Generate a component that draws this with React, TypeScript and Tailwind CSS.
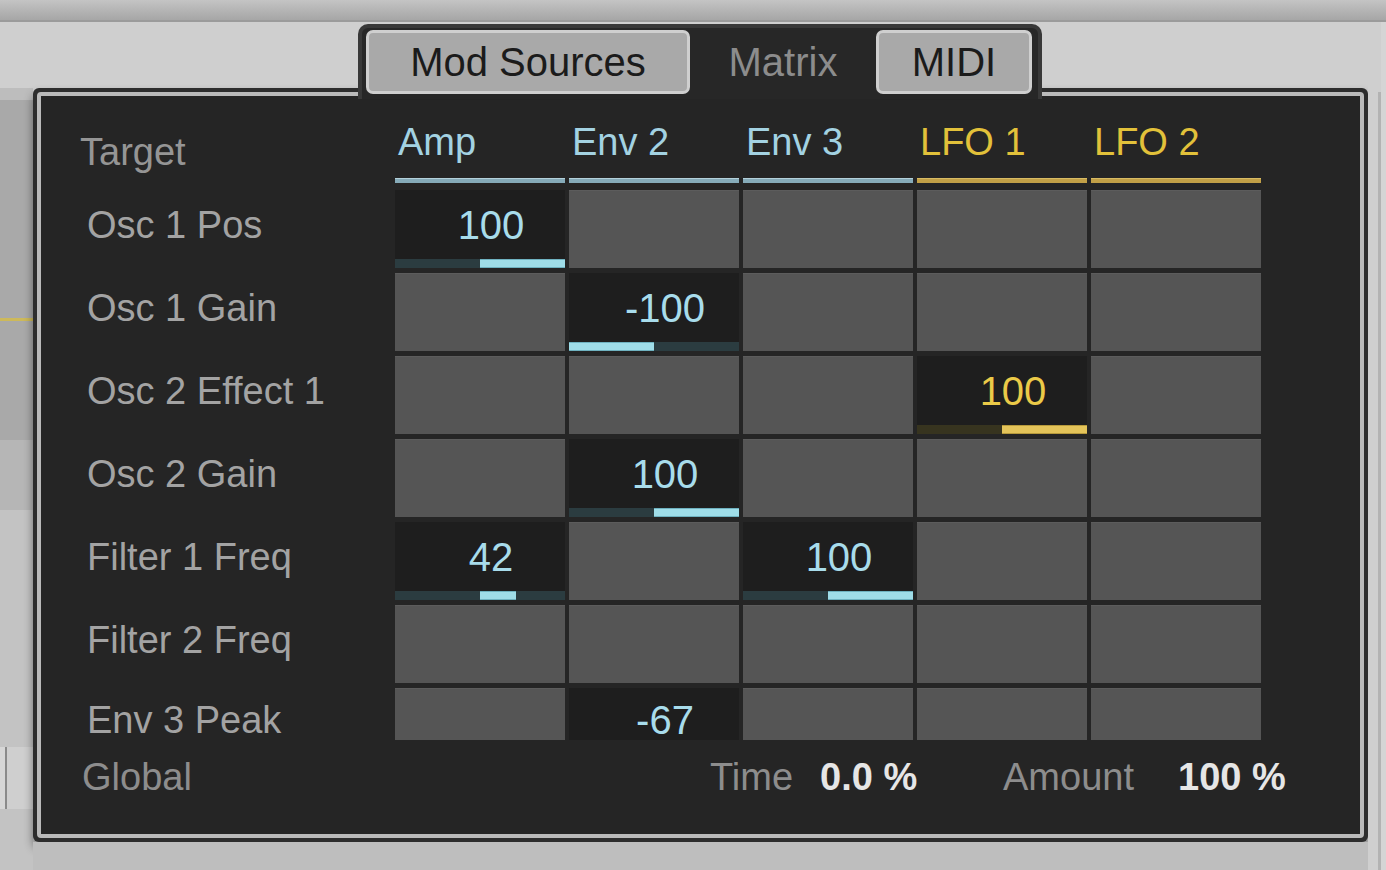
import React from 'react';

type Tone = 'blue' | 'yellow';

interface Source {
  name: string;
  tone: Tone;
}

interface Row {
  label: string;
  values: (number | null)[];
}

const sources: Source[] = [
  { name: 'Amp', tone: 'blue' },
  { name: 'Env 2', tone: 'blue' },
  { name: 'Env 3', tone: 'blue' },
  { name: 'LFO 1', tone: 'yellow' },
  { name: 'LFO 2', tone: 'yellow' },
];

const rows: Row[] = [
  { label: 'Osc 1 Pos', values: [100, null, null, null, null] },
  { label: 'Osc 1 Gain', values: [null, -100, null, null, null] },
  { label: 'Osc 2 Effect 1', values: [null, null, null, 100, null] },
  { label: 'Osc 2 Gain', values: [null, 100, null, null, null] },
  { label: 'Filter 1 Freq', values: [42, null, 100, null, null] },
  { label: 'Filter 2 Freq', values: [null, null, null, null, null] },
];

// last row is scrolled half out of view
const lastRow: Row = { label: 'Env 3 Peak', values: [null, -67, null, null, null] };

function Cell({ value, tone, short }: { value: number | null; tone: Tone; short?: boolean }) {
  const height = short ? 'h-[52px]' : 'h-[78px]';
  if (value === null) {
    return <div className={`${height} bg-[#555555] border-t border-[#5c5c5c]`} />;
  }
  const amount = Math.abs(value);
  const yellow = tone === 'yellow';
  const textColor = yellow ? 'text-[#ebca48]' : 'text-[#a8dceb]';
  const bar = yellow
    ? 'h-full bg-[#e4c45a] border-y border-[#b79a3c]'
    : 'h-full bg-[#9fdde8] border-y border-[#6fb2c0]';

  if (short) {
    return (
      <div className={`${height} bg-[#1e1e1e] flex justify-center pl-[22px] pt-[12px] text-[40px] leading-none ${textColor}`}>
        {value}
      </div>
    );
  }

  return (
    <div className={`${height} bg-[#1e1e1e] flex flex-col`}>
      <div className={`flex-1 flex items-center justify-center pl-[22px] text-[40px] leading-none ${textColor}`}>
        {value}
      </div>
      <div className={`h-[9px] flex ${yellow ? 'bg-[#37341f]' : 'bg-[#2b3c40]'}`}>
        <div className="w-1/2 flex justify-end">
          {value < 0 && <div className={bar} style={{ width: `${amount}%` }} />}
        </div>
        <div className="w-1/2 flex">
          {value > 0 && <div className={bar} style={{ width: `${amount}%` }} />}
        </div>
      </div>
    </div>
  );
}

function MatrixRow({ row, short }: { row: Row; short?: boolean }) {
  return (
    <div
      className={`grid grid-cols-[350px_170px_170px_170px_170px_170px] gap-x-[4px] ${
        short ? 'h-[52px]' : 'h-[78px]'
      }`}
    >
      <div
        className={`flex pl-[46px] text-[38px] leading-none text-[#a3a3a3] ${
          short ? 'items-start pt-[13px]' : 'items-center pb-[8px]'
        }`}
      >
        {row.label}
      </div>
      {row.values.map((v, i) => (
        <Cell key={i} value={v} tone={sources[i].tone} short={short} />
      ))}
    </div>
  );
}

function Tabs() {
  return (
    <div className="w-[684px] h-[75px] bg-[#272727] border-[4px] border-b-0 border-[#383838] rounded-t-[10px] flex pl-[4px] pt-[2px]">
      <div className="w-[324px] h-[64px] bg-[#a9a9a9] border-[3px] border-[#cfcfcf] rounded-[7px] flex items-center justify-center text-[40px] leading-none text-[#1b1b1b]">
        Mod Sources
      </div>
      <div className="w-[186px] h-[64px] flex items-center justify-center text-[40px] leading-none text-[#8c8c8c]">
        Matrix
      </div>
      <div className="w-[156px] h-[64px] bg-[#a9a9a9] border-[3px] border-[#cfcfcf] rounded-[7px] flex items-center justify-center text-[40px] leading-none text-[#1b1b1b]">
        MIDI
      </div>
    </div>
  );
}

function Panel() {
  return (
    <div className="w-[1335px] bg-[#2d2d2d] p-[4px] rounded-[6px] shadow-[0_6px_10px_rgba(0,0,0,0.45)]">
      <div className="h-[746px] bg-[#252525] border-[4px] border-[#bababa] rounded-[4px] flex flex-col">
        {/* header */}
        <div className="h-[87px] grid grid-cols-[350px_170px_170px_170px_170px_170px] gap-x-[4px]">
          <div className="flex items-end pl-[39px] pb-[12px] text-[38px] leading-none text-[#959595]">
            Target
          </div>
          {sources.map((s) => (
            <div key={s.name} className="flex flex-col justify-end">
              <div
                className={`pl-[3px] mb-[17px] text-[38px] leading-none ${
                  s.tone === 'yellow' ? 'text-[#e2c13a]' : 'text-[#a3d2e2]'
                }`}
              >
                {s.name}
              </div>
              <div
                className={`h-[5px] border-t ${
                  s.tone === 'yellow' ? 'bg-[#c2a047] border-[#d8bb63]' : 'bg-[#86abb9] border-[#b3d0da]'
                }`}
              />
            </div>
          ))}
        </div>

        <div className="mt-[7px] flex flex-col gap-[5px]">
          {rows.map((r) => (
            <MatrixRow key={r.label} row={r} />
          ))}
          <MatrixRow row={lastRow} short />
        </div>

        {/* global */}
        <div className="mt-[18px] flex items-center text-[38px] leading-none">
          <div className="w-[669px] pl-[41px] text-[#8d8d8d]">Global</div>
          <div className="w-[110px] text-[#8d8d8d]">Time</div>
          <div className="w-[183px] font-bold text-[#e6e6e6]">0.0 %</div>
          <div className="w-[175px] text-[#8d8d8d]">Amount</div>
          <div className="font-bold text-[#e6e6e6]">100 %</div>
        </div>
      </div>
    </div>
  );
}

export default function App() {
  return (
    <div className="w-[1386px] h-[870px] overflow-hidden bg-[#cfcfcf] font-['Liberation_Sans',Arial,sans-serif] flex flex-col">
      <div className="h-[22px] shrink-0 bg-linear-to-b from-[#c4c4c4] to-[#a6a6a6] border-b-2 border-[#9b9b9b]" />

      <div className="flex flex-1">
        {/* left neighbour device */}
        <div className="w-[33px] shrink-0 flex flex-col">
          <div className="h-[66px] bg-[#cfcfcf]" />
          <div className="h-[12px] bg-[#bdbdbd]" />
          <div className="h-[218px] bg-[#a9a9a9]" />
          <div className="h-[3px] bg-[#cdb95a]" />
          <div className="h-[119px] bg-[#a9a9a9]" />
          <div className="h-[70px] bg-[#b6b6b6]" />
          <div className="h-[237px] bg-[#c3c3c3]" />
          <div className="h-[62px] w-[7px] bg-[#d6d6d6] border-r-2 border-[#8a8a8a]" />
          <div className="flex-1 bg-[#c3c3c3]" />
        </div>

        <div className="w-[1335px] shrink-0 flex flex-col pt-[2px]">
          <div className="pl-[325px] relative z-10 -mb-[11px]">
            <Tabs />
          </div>
          <Panel />
          <div className="flex-1 bg-[#bebebe]" />
        </div>

        {/* right neighbour device */}
        <div className="flex-1 flex">
          <div className="w-[10px] bg-[#cfcfcf]" />
          <div className="w-[3px] bg-[#b3b3b3] mt-[70px]" />
          <div className="flex-1 bg-[#d5d5d5]" />
        </div>
      </div>
    </div>
  );
}
